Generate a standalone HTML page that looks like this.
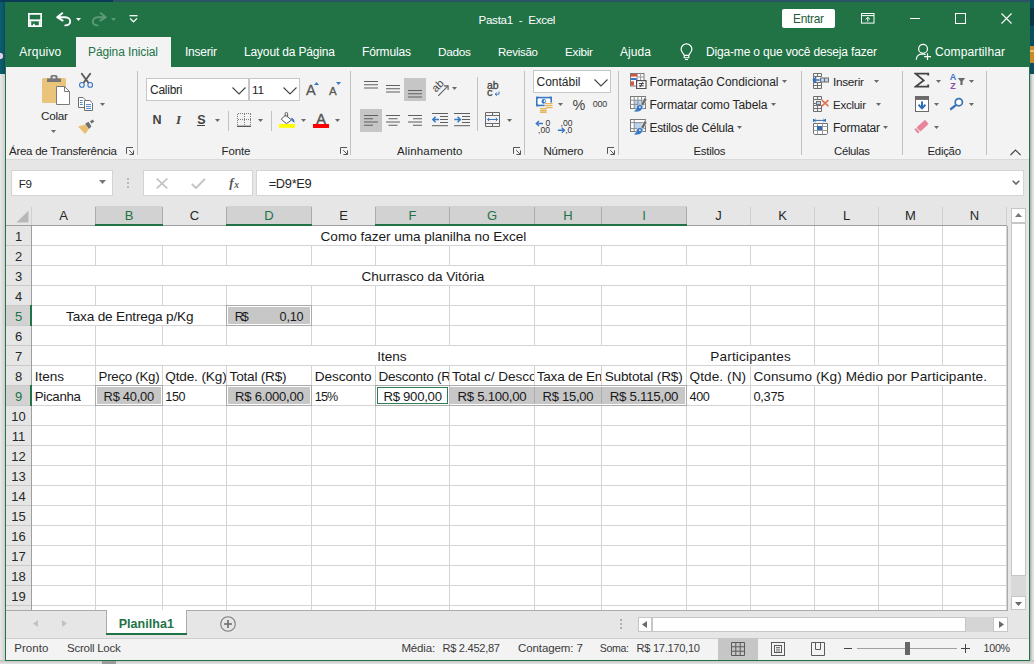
<!DOCTYPE html>
<html lang="pt-BR"><head><meta charset="utf-8"><title>Pasta1 - Excel</title>
<style>
*{box-sizing:border-box;margin:0;padding:0}
html,body{width:1034px;height:664px;overflow:hidden}
body{position:relative;background:#e4e4e4;font-family:"Liberation Sans",sans-serif;font-size:12px;color:#262626}
.a{position:absolute;display:block}
.t{position:absolute;display:block;white-space:pre}
</style></head>
<body>
<div class="a" style="left:0px;top:0px;width:1034px;height:74px;background:#0b4560;"></div>
<div class="a" style="left:0px;top:0px;width:5px;height:74px;background:linear-gradient(90deg,#0d6171,#0b4c62);"></div>
<div class="a" style="left:0px;top:0px;width:113px;height:2px;background:#0a3c58;"></div>
<div class="a" style="left:113px;top:0px;width:921px;height:2px;background:#2b5566;"></div>
<div class="a" style="left:0px;top:53px;width:4px;height:6px;background:#ddd6dc;border-radius:0 3px 3px 0;border-right:1px solid #2a3f8f;"></div>
<div class="a" style="left:1030px;top:0px;width:4px;height:74px;background:#0b4d5d;"></div>
<div class="a" style="left:1030px;top:8px;width:4px;height:18px;background:#0a3646;"></div>
<div class="a" style="left:1030px;top:46px;width:4px;height:17px;background:#c98a2b;"></div>
<div class="a" style="left:1030px;top:50px;width:4px;height:2px;background:#e6c384;"></div>
<div class="a" style="left:0px;top:74px;width:1034px;height:590px;background:#e9e9e9;"></div>
<div class="a" style="left:0px;top:74px;width:5px;height:590px;background:linear-gradient(90deg,#e9e9e9,#cfcfcf);"></div>
<div class="a" style="left:1030px;top:74px;width:4px;height:590px;background:linear-gradient(90deg,#a9a9a9,#e4e4e4 70%);"></div>
<div class="a" style="left:0px;top:660px;width:1034px;height:4px;background:linear-gradient(180deg,#bdbdbd,#e4e4e4);"></div>
<div class="a" style="left:102px;top:661px;width:14px;height:3px;background:#9c9c9c;"></div>
<div class="a" style="left:5px;top:2px;width:1025px;height:659px;background:#f3f3f3;border:1px solid #217346;"></div>
<div class="a" style="left:5px;top:2px;width:1025px;height:65px;background:#217346;"></div>
<div class="a" style="left:76px;top:37px;width:95px;height:30px;background:#f3f3f3;"></div>
<div class="a" style="left:6px;top:159px;width:1023px;height:1px;background:#dadada;"></div>
<div class="a" style="left:6px;top:160px;width:1023px;height:46px;background:#e6e6e6;"></div>
<svg class="a" style="left:28px;top:13px;" width="14" height="14" viewBox="0 0 14 14"><path d="M0.85 0.85h12.3v12.3h-12.3z" fill="none" stroke="#ffffff" stroke-width="1.7"/><rect x="1" y="6.4" width="12" height="1.9" fill="#ffffff"/><rect x="1.5" y="8.3" width="1.7" height="5" fill="#ffffff"/><rect x="10.8" y="8.3" width="1.7" height="5" fill="#ffffff"/><rect x="5.1" y="10.8" width="1.7" height="2.6" fill="#ffffff"/></svg>
<svg class="a" style="left:56px;top:12px;" width="16" height="15" viewBox="0 0 16 15"><path d="M1.2 5.3 L6.2 1.2 M1.2 5.3 L6.6 8.6 M1.6 5.3 H9.2 C12.6 5.3 14.2 7.4 14.2 9.4 C14.2 11.6 12.4 13.4 9.3 13.4" fill="none" stroke="#ffffff" stroke-width="1.9" stroke-linecap="round" stroke-linejoin="round"/></svg>
<svg class="a" style="left:76px;top:18px;" width="5" height="3" viewBox="0 0 5 3"><path d="M0 0h5l-2.5 3z" fill="#ffffff"/></svg>
<svg class="a" style="left:91px;top:12px;" width="16" height="15" viewBox="0 0 16 15"><path d="M14.8 5.3 L9.8 1.2 M14.8 5.3 L9.4 8.6 M14.4 5.3 H6.8 C3.4 5.3 1.8 7.4 1.8 9.4 C1.8 11.6 3.6 13.4 6.7 13.4" fill="none" stroke="#5c9a78" stroke-width="1.9" stroke-linecap="round" stroke-linejoin="round"/></svg>
<svg class="a" style="left:111px;top:18px;" width="5" height="3" viewBox="0 0 5 3"><path d="M0 0h5l-2.5 3z" fill="#5c9a78"/></svg>
<svg class="a" style="left:129px;top:15px;" width="9" height="8" viewBox="0 0 9 8"><path d="M0.5 0.7H8.5" stroke="#ffffff" stroke-width="1.3"/><path d="M1 3.4 L4.5 6.8 L8 3.4" fill="none" stroke="#ffffff" stroke-width="1.3"/></svg>
<span class="t" style="left:478.5px;top:14px;font-size:11.6px;line-height:12px;color:#ffffff;letter-spacing:-0.283px;">Pasta1  -  Excel</span>
<div class="a" style="left:782px;top:9px;width:53px;height:19px;background:#ffffff;border-radius:2px;"></div>
<span class="t" style="left:793px;top:12px;font-size:11.9px;line-height:14px;color:#1e5c3a;letter-spacing:-0.283px;">Entrar</span>
<svg class="a" style="left:861px;top:13px;" width="14" height="11" viewBox="0 0 14 11"><rect x="0.5" y="0.5" width="12.5" height="9.6" fill="none" stroke="#ffffff"/><path d="M0.5 2.6h12.5" stroke="#ffffff"/><path d="M6.8 8.6V4.6M4.6 6.4L6.8 4.3L9 6.4" fill="none" stroke="#ffffff"/></svg>
<div class="a" style="left:910px;top:18px;width:10px;height:1px;background:#ffffff;"></div>
<div class="a" style="left:955px;top:13px;width:11px;height:11px;border:1px solid #ffffff;"></div>
<svg class="a" style="left:1001px;top:13px;" width="11" height="11" viewBox="0 0 11 11"><path d="M0.5 0.5L10.5 10.5M10.5 0.5L0.5 10.5" stroke="#ffffff" stroke-width="1.1"/></svg>
<span class="t" style="left:19.3px;top:45px;font-size:12px;line-height:14px;color:#ffffff;letter-spacing:0.219px;">Arquivo</span>
<span class="t" style="left:88px;top:45px;font-size:12px;line-height:14px;color:#217346;letter-spacing:-0.107px;">Página Inicial</span>
<span class="t" style="left:185px;top:45px;font-size:12px;line-height:14px;color:#ffffff;letter-spacing:-0.224px;">Inserir</span>
<span class="t" style="left:244px;top:45px;font-size:12px;line-height:14px;color:#ffffff;letter-spacing:-0.161px;">Layout da Página</span>
<span class="t" style="left:362px;top:45px;font-size:12px;line-height:14px;color:#ffffff;letter-spacing:-0.145px;">Fórmulas</span>
<span class="t" style="left:438px;top:45px;font-size:11.8px;line-height:14px;color:#ffffff;letter-spacing:-0.277px;">Dados</span>
<span class="t" style="left:498px;top:46px;font-size:11.5px;line-height:12px;color:#ffffff;letter-spacing:-0.259px;">Revisão</span>
<span class="t" style="left:565px;top:45px;font-size:11.7px;line-height:13px;color:#ffffff;letter-spacing:-0.253px;">Exibir</span>
<span class="t" style="left:620px;top:45px;font-size:12px;line-height:14px;color:#ffffff;letter-spacing:0.074px;">Ajuda</span>
<svg class="a" style="left:680px;top:43px;" width="13" height="18" viewBox="0 0 13 18"><path d="M4.2 12.6 C4.2 10.8 1.1 9.6 1.1 6.3 C1.1 3.3 3.5 0.9 6.5 0.9 C9.5 0.9 11.9 3.3 11.9 6.3 C11.9 9.6 8.8 10.8 8.8 12.6" fill="none" stroke="#ffffff" stroke-width="1.2"/><path d="M4.2 12.4 V14.8 H8.8 V12.4 Z" fill="none" stroke="#ffffff" stroke-width="1.1"/><path d="M5 16.5H8" stroke="#ffffff" stroke-width="1.1"/></svg>
<span class="t" style="left:706px;top:45px;font-size:12px;line-height:14px;color:#ffffff;letter-spacing:-0.170px;">Diga-me o que você deseja fazer</span>
<svg class="a" style="left:915px;top:43px;" width="17" height="18" viewBox="0 0 17 18"><circle cx="8.05" cy="5.8" r="4.45" fill="none" stroke="#ffffff" stroke-width="1.2"/><path d="M1.3 16.8 C1.3 13.2 4 11 7.2 10.9 C8.6 10.9 9.8 11.2 10.6 11.8" fill="none" stroke="#ffffff" stroke-width="1.2"/><path d="M12.5 10.2V16.9M9.1 13.6H16" stroke="#ffffff" stroke-width="1.2"/></svg>
<span class="t" style="left:935px;top:45px;font-size:12px;line-height:14px;color:#ffffff;letter-spacing:0.118px;">Compartilhar</span>
<div class="a" style="left:137px;top:71px;width:1px;height:84px;background:#c2c2c2;"></div>
<div class="a" style="left:350px;top:71px;width:1px;height:84px;background:#c2c2c2;"></div>
<div class="a" style="left:524px;top:71px;width:1px;height:84px;background:#c2c2c2;"></div>
<div class="a" style="left:618px;top:71px;width:1px;height:84px;background:#c2c2c2;"></div>
<div class="a" style="left:801px;top:71px;width:1px;height:84px;background:#c2c2c2;"></div>
<div class="a" style="left:902px;top:71px;width:1px;height:84px;background:#c2c2c2;"></div>
<div class="a" style="left:986px;top:71px;width:1px;height:84px;background:#c2c2c2;"></div>
<svg class="a" style="left:42px;top:75px;" width="28" height="30" viewBox="0 0 28 30"><rect x="0" y="3" width="24" height="25" rx="1.5" fill="#eac47a"/><path d="M5 7V3.5h3.5V1.8C8.5 0.8 9.3 0 10.3 0h3.4c1 0 1.8 0.8 1.8 1.8V3.5H19V7z" fill="#767676"/><rect x="10.5" y="1.6" width="3" height="1.8" fill="#f3f3f3"/><path d="M14.5 11.5h8l5 5V29.5h-13z" fill="#ffffff" stroke="#7b7b7b"/><path d="M22.5 11.5v5h5" fill="none" stroke="#7b7b7b"/></svg>
<span class="t" style="left:41px;top:109px;font-size:11.7px;line-height:13px;letter-spacing:-0.243px;">Colar</span>
<svg class="a" style="left:51px;top:130px;" width="5" height="3" viewBox="0 0 5 3"><path d="M0 0h5l-2.5 3z" fill="#6a6a6a"/></svg>
<svg class="a" style="left:78px;top:72px;" width="16" height="17" viewBox="0 0 16 17"><path d="M3.8 1.8 L10.4 10.8 M12.2 1.8 L5.6 10.8" stroke="#5a5a5a" stroke-width="1.9" fill="none" stroke-linecap="round"/><circle cx="3.9" cy="12.9" r="2.35" fill="#f3f3f3" stroke="#3b78c4" stroke-width="1.1"/><circle cx="12.2" cy="12.9" r="2.35" fill="#f3f3f3" stroke="#3b78c4" stroke-width="1.1"/></svg>
<svg class="a" style="left:78px;top:97px;" width="16" height="15" viewBox="0 0 16 15"><path d="M0.5 0.5h4.6l2 2V10.5h-6.6z" fill="#fff" stroke="#6e6e6e"/><path d="M2 3.5h2.6M2 5.5h2.6M2 7.5h2.6" stroke="#3b78c4" stroke-width=".9"/><path d="M6.5 3.5h5.4l2.6 2.6v7.4h-8z" fill="#fff" stroke="#6e6e6e"/><path d="M8 7.6h5M8 9.6h5M8 11.6h5" stroke="#3b78c4" stroke-width=".9"/></svg>
<svg class="a" style="left:100px;top:103px;" width="5" height="3" viewBox="0 0 5 3"><path d="M0 0h5l-2.5 3z" fill="#6a6a6a"/></svg>
<svg class="a" style="left:78px;top:119px;" width="17" height="16" viewBox="0 0 17 16"><path d="M0.1 7.5 L7.5 5.4 L10.7 10.6 L7 14.9 Z" fill="#eabf72"/><path d="M7.2 4.8 L10.5 2.8 L13.5 7.6 L10.9 10 Z" fill="#6e6e6e"/><path d="M12 2.2 L14.9 0.6 L16.2 2.7 L13.3 4.6 Z" fill="#6e6e6e"/></svg>
<span class="t" style="left:9px;top:144.5px;font-size:11.5px;line-height:12px;letter-spacing:-0.258px;">Área de Transferência</span>
<svg class="a" style="left:126px;top:147px;" width="8" height="8" viewBox="0 0 8 8"><path d="M0.5 6.8V0.5H7" fill="none" stroke="#555"/><path d="M3.2 3.2L7.2 7.2M7.5 3.4V7.5H3.4" fill="none" stroke="#555" stroke-width="1"/></svg>
<div class="a" style="left:146px;top:78px;width:103px;height:23px;background:#fff;border:1px solid #c6c6c6;"></div>
<div class="a" style="left:249px;top:78px;width:51px;height:23px;background:#fff;border:1px solid #c6c6c6;border-left:none;"></div>
<div class="a" style="left:249px;top:79px;width:1px;height:21px;background:#c6c6c6;"></div>
<span class="t" style="left:150px;top:83px;font-size:12px;line-height:14px;letter-spacing:-0.253px;">Calibri</span>
<span class="t" style="left:252px;top:83px;font-size:11.8px;line-height:14px;letter-spacing:-0.261px;">11</span>
<svg class="a" style="left:232px;top:87px;" width="14" height="8" viewBox="0 0 14 8"><path d="M0.5 0.5L7 7L13.5 0.5" fill="none" stroke="#444" stroke-width="1.1"/></svg>
<svg class="a" style="left:283px;top:87px;" width="14" height="8" viewBox="0 0 14 8"><path d="M0.5 0.5L7 7L13.5 0.5" fill="none" stroke="#444" stroke-width="1.1"/></svg>
<span class="t" style="left:306px;top:81.5px;font-size:14.5px;line-height:16px;color:#555;-webkit-text-stroke:0.3px #555;">A</span>
<svg class="a" style="left:314px;top:82px;" width="5" height="3" viewBox="0 0 5 3"><path d="M0 3h5l-2.5-3z" fill="#3b78c4"/></svg>
<span class="t" style="left:329px;top:84.5px;font-size:11.5px;line-height:12px;color:#555;-webkit-text-stroke:0.3px #555;">A</span>
<svg class="a" style="left:336px;top:82px;" width="5" height="3" viewBox="0 0 5 3"><path d="M0 0h5l-2.5 3z" fill="#3b78c4"/></svg>
<span class="t" style="left:152.5px;top:113px;font-size:12.5px;line-height:14px;color:#444;font-weight:700;letter-spacing:-0.031px;">N</span>
<span class="t" style="left:176px;top:112px;font-size:13px;line-height:15px;color:#444;font-weight:700;font-family:'Liberation Serif',serif;font-style:italic;">I</span>
<span class="t" style="left:197.2px;top:113px;font-size:12.5px;line-height:14px;color:#444;font-weight:700;">S</span>
<div class="a" style="left:197px;top:125px;width:8px;height:1px;background:#444;"></div>
<svg class="a" style="left:215px;top:119px;" width="5" height="3" viewBox="0 0 5 3"><path d="M0 0h5l-2.5 3z" fill="#6a6a6a"/></svg>
<div class="a" style="left:228px;top:111px;width:1px;height:20px;background:#c2c2c2;"></div>
<svg class="a" style="left:237px;top:113px;" width="14" height="14" viewBox="0 0 14 14"><path d="M0.5 0.5H13.5M0.5 0.5V13M13.5 0.5V13M7 0.5V13M0.5 6.5H13.5" stroke="#7f7f7f" stroke-width="1" stroke-dasharray="1 1" fill="none" shape-rendering="crispEdges"/><path d="M0 13.3H14" stroke="#444" stroke-width="1.2"/></svg>
<svg class="a" style="left:258px;top:119px;" width="5" height="3" viewBox="0 0 5 3"><path d="M0 0h5l-2.5 3z" fill="#6a6a6a"/></svg>
<div class="a" style="left:271px;top:111px;width:1px;height:20px;background:#c2c2c2;"></div>
<svg class="a" style="left:279px;top:112px;" width="17" height="16" viewBox="0 0 17 16"><path d="M6.5 3.2 L12.5 8 L7.5 11.6 L2.2 7.2Z" fill="#fff" stroke="#5a5a5a" stroke-width="1"/><path d="M6.2 4.5V1.6c0-.8.5-1.2 1.2-1.2s1.2.4 1.2 1.2V5" fill="none" stroke="#5a5a5a"/><path d="M12.4 5.6c2.4 1 3.6 3 3 5.4-1.2-.8-2.2-2-3.2-3.6z" fill="#3b78c4"/><rect x="0" y="12" width="16" height="3.8" fill="#ffff00"/></svg>
<svg class="a" style="left:301px;top:119px;" width="5" height="3" viewBox="0 0 5 3"><path d="M0 0h5l-2.5 3z" fill="#6a6a6a"/></svg>
<span class="t" style="left:316.3px;top:110.5px;font-size:14.5px;line-height:16px;color:#555;-webkit-text-stroke:0.45px #555;">A</span>
<div class="a" style="left:313px;top:124px;width:16px;height:4px;background:#ff0000;"></div>
<svg class="a" style="left:335px;top:119px;" width="5" height="3" viewBox="0 0 5 3"><path d="M0 0h5l-2.5 3z" fill="#6a6a6a"/></svg>
<span class="t" style="left:221.5px;top:144.5px;font-size:11.5px;line-height:12px;letter-spacing:-0.105px;">Fonte</span>
<svg class="a" style="left:340px;top:147px;" width="8" height="8" viewBox="0 0 8 8"><path d="M0.5 6.8V0.5H7" fill="none" stroke="#555"/><path d="M3.2 3.2L7.2 7.2M7.5 3.4V7.5H3.4" fill="none" stroke="#555" stroke-width="1"/></svg>
<svg class="a" style="left:364px;top:81px;" width="14" height="10.75" viewBox="0 0 14 10.75"><rect x="0" y="0.00" width="14" height="1" fill="#5f5f5f"/><rect x="0" y="3.25" width="14" height="1" fill="#5f5f5f"/><rect x="0" y="6.50" width="14" height="1" fill="#5f5f5f"/></svg>
<svg class="a" style="left:386px;top:85px;" width="14" height="10.75" viewBox="0 0 14 10.75"><rect x="0" y="0.00" width="14" height="1" fill="#5f5f5f"/><rect x="0" y="3.25" width="14" height="1" fill="#5f5f5f"/><rect x="0" y="6.50" width="14" height="1" fill="#5f5f5f"/></svg>
<div class="a" style="left:404px;top:78px;width:22px;height:23px;background:#c6c6c6;"></div>
<svg class="a" style="left:408px;top:90px;" width="14" height="10.75" viewBox="0 0 14 10.75"><rect x="0" y="0.00" width="14" height="1" fill="#5f5f5f"/><rect x="0" y="3.25" width="14" height="1" fill="#5f5f5f"/><rect x="0" y="6.50" width="14" height="1" fill="#5f5f5f"/></svg>
<svg class="a" style="left:430px;top:79px;" width="20" height="18" viewBox="0 0 20 18"><path d="M8.2 16.8 L17.8 7.2" stroke="#5f5f5f" stroke-width="1.1" fill="none"/><path d="M14 6.9 L18.1 6.9 L18.1 11" fill="none" stroke="#5f5f5f" stroke-width="1.1"/><text x="0" y="0" font-family="Liberation Sans, sans-serif" font-size="11" fill="#444" transform="translate(5.9 13.7) rotate(-45)">ab</text></svg>
<svg class="a" style="left:452px;top:87px;" width="5" height="3" viewBox="0 0 5 3"><path d="M0 0h5l-2.5 3z" fill="#6a6a6a"/></svg>
<div class="a" style="left:477px;top:77px;width:1px;height:54px;background:#c2c2c2;"></div>
<span class="t" style="left:487px;top:78.5px;font-size:10.5px;line-height:12px;color:#444;letter-spacing:-0.193px;-webkit-text-stroke:0.3px #444;">ab</span>
<span class="t" style="left:487px;top:85.7px;font-size:11px;line-height:12px;color:#444;-webkit-text-stroke:0.3px #444;">c</span>
<svg class="a" style="left:493.5px;top:90.5px;" width="6" height="6" viewBox="0 0 6 6"><path d="M5 0.5V3.2H1.2M2.8 1.6L1.1 3.2L2.8 4.8" fill="none" stroke="#3b78c4" stroke-width="1"/></svg>
<div class="a" style="left:360px;top:109px;width:22px;height:23px;background:#c6c6c6;"></div>
<svg class="a" style="left:364px;top:115px;" width="14" height="14.0" viewBox="0 0 14 14.0"><rect x="0" y="0.00" width="14" height="1" fill="#5f5f5f"/><rect x="0" y="3.25" width="9" height="1" fill="#5f5f5f"/><rect x="0" y="6.50" width="14" height="1" fill="#5f5f5f"/><rect x="0" y="9.75" width="9" height="1" fill="#5f5f5f"/></svg>
<svg class="a" style="left:386px;top:115px;" width="14" height="14.0" viewBox="0 0 14 14.0"><rect x="0" y="0.00" width="14" height="1" fill="#5f5f5f"/><rect x="2.5" y="3.25" width="9" height="1" fill="#5f5f5f"/><rect x="0" y="6.50" width="14" height="1" fill="#5f5f5f"/><rect x="2.5" y="9.75" width="9" height="1" fill="#5f5f5f"/></svg>
<svg class="a" style="left:408px;top:115px;" width="14" height="14.0" viewBox="0 0 14 14.0"><rect x="0" y="0.00" width="14" height="1" fill="#5f5f5f"/><rect x="5" y="3.25" width="9" height="1" fill="#5f5f5f"/><rect x="0" y="6.50" width="14" height="1" fill="#5f5f5f"/><rect x="5" y="9.75" width="9" height="1" fill="#5f5f5f"/></svg>
<svg class="a" style="left:432px;top:113px;" width="16" height="14" viewBox="0 0 16 14"><rect x="0" y="0" width="16" height="1" fill="#5f5f5f"/><rect x="8" y="3" width="8" height="1" fill="#5f5f5f"/><rect x="8" y="6" width="8" height="1" fill="#5f5f5f"/><rect x="8" y="9" width="8" height="1" fill="#5f5f5f"/><rect x="0" y="12.2" width="16" height="1" fill="#5f5f5f"/><path d="M7 6.5H1.2M3.6 3.8L0.9 6.5L3.6 9.2" fill="none" stroke="#3b78c4" stroke-width="1.6"/></svg>
<svg class="a" style="left:454px;top:113px;" width="16" height="14" viewBox="0 0 16 14"><rect x="0" y="0" width="16" height="1" fill="#5f5f5f"/><rect x="8" y="3" width="8" height="1" fill="#5f5f5f"/><rect x="8" y="6" width="8" height="1" fill="#5f5f5f"/><rect x="8" y="9" width="8" height="1" fill="#5f5f5f"/><rect x="0" y="12.2" width="16" height="1" fill="#5f5f5f"/><path d="M0.3 6.5H6M3.6 3.8L6.3 6.5L3.6 9.2" fill="none" stroke="#3b78c4" stroke-width="1.6"/></svg>
<svg class="a" style="left:485px;top:112px;" width="15" height="15" viewBox="0 0 15 15"><path d="M0.5 0.5H14.5V14.5H0.5Z M0.5 3.5H14.5 M0.5 11.5H14.5 M7.5 0.5V3.5 M7.5 11.5V14.5" fill="none" stroke="#6a6a6a" stroke-width="1"/><path d="M2.5 7.5H12.5M4.2 5.8L2.5 7.5L4.2 9.2M10.8 5.8L12.5 7.5L10.8 9.2" fill="none" stroke="#3b78c4" stroke-width="1"/></svg>
<svg class="a" style="left:507px;top:119px;" width="5" height="3" viewBox="0 0 5 3"><path d="M0 0h5l-2.5 3z" fill="#6a6a6a"/></svg>
<span class="t" style="left:397px;top:144.5px;font-size:11.5px;line-height:12px;letter-spacing:0.156px;">Alinhamento</span>
<svg class="a" style="left:513px;top:147px;" width="8" height="8" viewBox="0 0 8 8"><path d="M0.5 6.8V0.5H7" fill="none" stroke="#555"/><path d="M3.2 3.2L7.2 7.2M7.5 3.4V7.5H3.4" fill="none" stroke="#555" stroke-width="1"/></svg>
<div class="a" style="left:533px;top:70px;width:78px;height:23px;background:#fff;border:1px solid #c6c6c6;"></div>
<span class="t" style="left:536.5px;top:75px;font-size:12px;line-height:14px;">Contábil</span>
<svg class="a" style="left:593.5px;top:79px;" width="14" height="8" viewBox="0 0 14 8"><path d="M0.5 0.5L7 7L13.5 0.5" fill="none" stroke="#444" stroke-width="1.1"/></svg>
<svg class="a" style="left:536px;top:95.6px;" width="17" height="17" viewBox="0 0 17 17"><rect x="0.8" y="1.6" width="14.4" height="7.8" fill="#fff" stroke="#3b78c4" stroke-width="1.6"/><path d="M0 0.8h3.2L0 4zM16 0.8h-3.2L16 4zM0 10.2h3.2L0 7zM16 10.2h-3.2L16 7z" fill="#3b78c4"/><circle cx="7.8" cy="5.4" r="2.3" fill="#3b78c4"/><circle cx="8.6" cy="5" r="0.9" fill="#fff"/><rect x="8.6" y="6.6" width="8" height="6.6" fill="#f3f3f3"/><path d="M9.6 7.6h6.4M9.6 9.6h6.4M9.6 11.6h6.4" stroke="#e8b65a" stroke-width="1.4" stroke-linecap="round"/><rect x="3.6" y="11.4" width="7" height="5.6" fill="#f3f3f3"/><path d="M4.6 12.6h5.6M4.6 14.5h5.6M4.6 16.3h5.6" stroke="#e8b65a" stroke-width="1.4" stroke-linecap="round"/></svg>
<svg class="a" style="left:558px;top:103px;" width="5" height="3" viewBox="0 0 5 3"><path d="M0 0h5l-2.5 3z" fill="#6a6a6a"/></svg>
<span class="t" style="left:572.5px;top:97px;font-size:14.4px;line-height:16px;color:#444;letter-spacing:-0.318px;">%</span>
<span class="t" style="left:592.8px;top:98.8px;font-size:9.0px;line-height:10px;color:#3a3a3a;letter-spacing:-0.262px;">000</span>
<svg class="a" style="left:535px;top:119px;" width="17" height="16" viewBox="0 0 17 16"><path d="M8 4.5H1.4M4 2L1.3 4.5L4 7" fill="none" stroke="#3b78c4" stroke-width="1.4"/><text x="10.6" y="6.6" font-family="Liberation Sans, sans-serif" font-size="8.6" fill="#333">0</text><text x="3" y="14" font-family="Liberation Sans, sans-serif" font-size="8.6" fill="#333">,00</text></svg>
<svg class="a" style="left:557px;top:119px;" width="17" height="16" viewBox="0 0 17 16"><text x="3.6" y="6.6" font-family="Liberation Sans, sans-serif" font-size="8.6" fill="#333">,00</text><path d="M0.8 11.3H7.4M4.8 8.8L7.5 11.3L4.8 13.8" fill="none" stroke="#3b78c4" stroke-width="1.4"/><text x="8.2" y="14" font-family="Liberation Sans, sans-serif" font-size="8.6" fill="#333">,0</text></svg>
<span class="t" style="left:543.5px;top:144.5px;font-size:11.5px;line-height:12px;letter-spacing:-0.181px;">Número</span>
<svg class="a" style="left:607px;top:147px;" width="8" height="8" viewBox="0 0 8 8"><path d="M0.5 6.8V0.5H7" fill="none" stroke="#555"/><path d="M3.2 3.2L7.2 7.2M7.5 3.4V7.5H3.4" fill="none" stroke="#555" stroke-width="1"/></svg>
<svg class="a" style="left:630px;top:73px;" width="17" height="16" viewBox="0 0 17 16"><rect x="0.5" y="0.5" width="13.5" height="12.5" fill="#fff" stroke="#7a7a7a"/><path d="M7.2 0.5V8M10.6 0.5V8M7.2 4H14" stroke="#9a9a9a" fill="none"/><rect x="1" y="1" width="6.2" height="2.6" fill="#d8553a"/><rect x="1" y="5" width="5.8" height="2" fill="#3b78c4"/><rect x="1" y="8.4" width="3" height="4.1" fill="#d8553a"/><rect x="6.6" y="7.6" width="9.4" height="8" fill="#fff" stroke="#4f4f4f" stroke-width="1.2"/><path d="M8.8 10.6h5M8.8 12.8h5M12.8 9.2L10 14.2" stroke="#3a3a3a" stroke-width="1" fill="none"/></svg>
<span class="t" style="left:649.5px;top:75px;font-size:12px;line-height:14px;letter-spacing:-0.051px;">Formatação Condicional</span>
<svg class="a" style="left:782px;top:80px;" width="5" height="3" viewBox="0 0 5 3"><path d="M0 0h5l-2.5 3z" fill="#6a6a6a"/></svg>
<svg class="a" style="left:630px;top:96px;" width="18" height="17" viewBox="0 0 18 17"><rect x="0.5" y="0.5" width="15" height="12" fill="#fff" stroke="#7a7a7a"/><rect x="4.4" y="4.4" width="7.2" height="7.8" fill="#b9d3ee"/><path d="M0.5 4.2H15.5M0.5 8.4H15.5M4.2 0.5V12.5M7.9 0.5V12.5M11.6 0.5V12.5" stroke="#8a8a8a" fill="none"/><path d="M14.6 1.4 L17 3.2 L13.2 10.2 L10.6 8.4 Z" fill="#6a6a6a" stroke="#f3f3f3" stroke-width=".6"/><path d="M10.8 8.6 C8.2 8 6.6 9.8 6.4 11.6 C6.2 13 5 14.6 3.6 15.4 C7.4 16.8 12.4 15.6 13.2 10.6 Z" fill="#3b78c4" stroke="#f3f3f3" stroke-width=".6"/><circle cx="9.9" cy="11.2" r=".9" fill="#e8f0fa"/></svg>
<span class="t" style="left:649.5px;top:98px;font-size:12px;line-height:14px;letter-spacing:-0.097px;">Formatar como Tabela</span>
<svg class="a" style="left:771px;top:103px;" width="5" height="3" viewBox="0 0 5 3"><path d="M0 0h5l-2.5 3z" fill="#6a6a6a"/></svg>
<svg class="a" style="left:630px;top:119px;" width="18" height="17" viewBox="0 0 18 17"><rect x="0.5" y="0.5" width="15" height="12" fill="#fff" stroke="#7a7a7a"/><rect x="4.4" y="4" width="7.4" height="5.4" fill="#b9d3ee"/><path d="M0.5 3.6H15.5M0.5 9.6H15.5M4.2 0.5V12.5" stroke="#8a8a8a" fill="none"/><path d="M14.6 1.4 L17 3.2 L13.2 10.2 L10.6 8.4 Z" fill="#6a6a6a" stroke="#f3f3f3" stroke-width=".6"/><path d="M10.8 8.6 C8.2 8 6.6 9.8 6.4 11.6 C6.2 13 5 14.6 3.6 15.4 C7.4 16.8 12.4 15.6 13.2 10.6 Z" fill="#3b78c4" stroke="#f3f3f3" stroke-width=".6"/><circle cx="9.9" cy="11.2" r=".9" fill="#e8f0fa"/></svg>
<span class="t" style="left:649.5px;top:120.5px;font-size:11.9px;line-height:14px;letter-spacing:-0.259px;">Estilos de Célula</span>
<svg class="a" style="left:737px;top:126px;" width="5" height="3" viewBox="0 0 5 3"><path d="M0 0h5l-2.5 3z" fill="#6a6a6a"/></svg>
<span class="t" style="left:693.5px;top:144.5px;font-size:11.4px;line-height:12px;letter-spacing:-0.263px;">Estilos</span>
<svg class="a" style="left:812px;top:72px;" width="18" height="18" viewBox="0 0 18 18"><path d="M1.5 1.5h8v3h-8zM5.5 1.5v3M1.5 10.5h8v6h-8zM5.5 10.5v6M1.5 13.5h8M1.5 4.5v6" fill="none" stroke="#6f6f6f"/><rect x="8.5" y="6" width="8" height="4" fill="#b9d3ee" stroke="#6f6f6f"/><path d="M12.5 6v4" stroke="#6f6f6f"/><path d="M7.6 8H1.6M4.2 5.4L1.5 8L4.2 10.6" fill="none" stroke="#2e6db5" stroke-width="1.6"/></svg>
<span class="t" style="left:833px;top:75px;font-size:11.8px;line-height:14px;letter-spacing:-0.298px;">Inserir</span>
<svg class="a" style="left:874px;top:80px;" width="5" height="3" viewBox="0 0 5 3"><path d="M0 0h5l-2.5 3z" fill="#6a6a6a"/></svg>
<svg class="a" style="left:812px;top:95px;" width="18" height="18" viewBox="0 0 18 18"><path d="M1.5 1.5h8v3h-8zM5.5 1.5v3M1.5 10.5h8v6h-8zM5.5 10.5v6M1.5 13.5h8M1.5 4.5v6M1.5 8.5h3" fill="none" stroke="#6f6f6f"/><rect x="4.5" y="6.5" width="4" height="3" fill="#b9d3ee" stroke="#6f6f6f"/><path d="M9.8 5.2L16.4 11.2M16.4 5.2L9.8 11.2" stroke="#e0714d" stroke-width="1.6" fill="none"/></svg>
<span class="t" style="left:833px;top:99px;font-size:11.5px;line-height:12px;letter-spacing:-0.252px;">Excluir</span>
<svg class="a" style="left:876px;top:103px;" width="5" height="3" viewBox="0 0 5 3"><path d="M0 0h5l-2.5 3z" fill="#6a6a6a"/></svg>
<svg class="a" style="left:812px;top:118px;" width="18" height="18" viewBox="0 0 18 18"><path d="M1.5 1V3.8M13.5 1V3.8M2 2.4H13M3.6 1L2 2.4L3.6 3.8M11.4 1L13 2.4L11.4 3.8" stroke="#2e6db5" fill="none" stroke-width="1"/><path d="M1.5 5.5h14v9.5c0 .8-.6 1.5-1.5 1.5h-11c-.9 0-1.5-.7-1.5-1.5z" fill="#fff" stroke="#6f6f6f"/><path d="M1.5 8.5h14M1.5 12.5h14M5.5 5.5v11M10.5 5.5v11" stroke="#9a9a9a" fill="none"/><rect x="5" y="8" width="5" height="4" fill="#2e6db5"/></svg>
<span class="t" style="left:833px;top:120.5px;font-size:12px;line-height:14px;letter-spacing:-0.241px;">Formatar</span>
<svg class="a" style="left:883px;top:126px;" width="5" height="3" viewBox="0 0 5 3"><path d="M0 0h5l-2.5 3z" fill="#6a6a6a"/></svg>
<span class="t" style="left:834px;top:144.5px;font-size:11.3px;line-height:12px;letter-spacing:-0.282px;">Células</span>
<svg class="a" style="left:914px;top:72px;" width="16" height="17" viewBox="0 0 16 17"><path d="M14.2 3.6V1.6H1.6L9.6 8.4L1.6 14.6H14.2V12.6" fill="none" stroke="#444" stroke-width="1.9" stroke-linejoin="miter"/></svg>
<svg class="a" style="left:936px;top:80px;" width="5" height="3" viewBox="0 0 5 3"><path d="M0 0h5l-2.5 3z" fill="#6a6a6a"/></svg>
<svg class="a" style="left:949px;top:72px;" width="17" height="18" viewBox="0 0 17 18"><text x="0.8" y="7.6" font-family="Liberation Sans, sans-serif" font-size="9" font-weight="700" fill="#3b78c4">A</text><text x="1.2" y="16.8" font-family="Liberation Sans, sans-serif" font-size="9" font-weight="700" fill="#8a4fb0">Z</text><path d="M8.8 6H16.2L13.6 9.2V13H11.4V9.2Z" fill="#6a6a6a"/></svg>
<svg class="a" style="left:969px;top:80px;" width="5" height="3" viewBox="0 0 5 3"><path d="M0 0h5l-2.5 3z" fill="#6a6a6a"/></svg>
<svg class="a" style="left:915px;top:96px;" width="14" height="16" viewBox="0 0 14 16"><rect x="0.5" y="0.5" width="13" height="15" fill="#fff" stroke="#6a6a6a"/><rect x="0.5" y="0.5" width="13" height="3.4" fill="#6a6a6a"/><path d="M7 5.6V12M3.6 8.8L7 12.4L10.4 8.8" fill="none" stroke="#2e6db5" stroke-width="2"/></svg>
<svg class="a" style="left:934px;top:103px;" width="5" height="3" viewBox="0 0 5 3"><path d="M0 0h5l-2.5 3z" fill="#6a6a6a"/></svg>
<svg class="a" style="left:949px;top:97px;" width="15" height="14" viewBox="0 0 15 14"><circle cx="9.8" cy="5.2" r="3.6" fill="#fff" stroke="#3b73b5" stroke-width="1.7"/><path d="M6.8 8.2L2 12" stroke="#3b73b5" stroke-width="2.3" stroke-linecap="round"/></svg>
<svg class="a" style="left:969px;top:103px;" width="5" height="3" viewBox="0 0 5 3"><path d="M0 0h5l-2.5 3z" fill="#6a6a6a"/></svg>
<svg class="a" style="left:914px;top:119px;" width="16" height="15" viewBox="0 0 16 15"><g transform="rotate(-42 7.8 7.4)"><rect x="3.2" y="4.6" width="11.4" height="5.6" rx="1" fill="#e8859b"/><rect x="0.2" y="4.6" width="2.2" height="5.6" rx=".8" fill="#e8859b"/></g></svg>
<svg class="a" style="left:934px;top:126px;" width="5" height="3" viewBox="0 0 5 3"><path d="M0 0h5l-2.5 3z" fill="#6a6a6a"/></svg>
<span class="t" style="left:927.5px;top:144.5px;font-size:11.4px;line-height:12px;letter-spacing:-0.273px;">Edição</span>
<svg class="a" style="left:1010px;top:149px;" width="11" height="7" viewBox="0 0 11 7"><path d="M0.5 6L5.5 1L10.5 6" fill="none" stroke="#444" stroke-width="1.1"/></svg>
<div class="a" style="left:11px;top:170px;width:102px;height:26px;background:#fff;border:1px solid #d4d4d4;"></div>
<span class="t" style="left:18.7px;top:178px;font-size:11.6px;line-height:12px;letter-spacing:-0.343px;">F9</span>
<svg class="a" style="left:99px;top:180px;" width="7" height="4" viewBox="0 0 7 4"><path d="M0 0h7l-3.5 4z" fill="#777"/></svg>
<div class="a" style="left:127px;top:178px;width:2px;height:2px;background:#b8b8b8;"></div>
<div class="a" style="left:127px;top:182px;width:2px;height:2px;background:#b8b8b8;"></div>
<div class="a" style="left:127px;top:186px;width:2px;height:2px;background:#b8b8b8;"></div>
<div class="a" style="left:143px;top:170px;width:110px;height:26px;background:#fff;border:1px solid #d4d4d4;"></div>
<svg class="a" style="left:156px;top:178px;" width="12" height="11" viewBox="0 0 12 11"><path d="M0.7 0.7L11.3 10.3M11.3 0.7L0.7 10.3" stroke="#c3c3c3" stroke-width="1.8" fill="none"/></svg>
<svg class="a" style="left:191px;top:178px;" width="15" height="11" viewBox="0 0 15 11"><path d="M0.8 6L5 10L14 0.8" stroke="#c3c3c3" stroke-width="1.9" fill="none"/></svg>
<span class="t" style="left:229.3px;top:174.5px;font-size:13px;line-height:15px;color:#555;font-weight:700;font-family:'Liberation Serif',serif;font-style:italic;">f</span>
<span class="t" style="left:234.3px;top:179.8px;font-size:9.5px;line-height:11px;color:#555;font-weight:700;font-family:'Liberation Serif',serif;font-style:italic;">x</span>
<div class="a" style="left:256px;top:170px;width:768px;height:26px;background:#fff;border:1px solid #d4d4d4;"></div>
<span class="t" style="left:268.7px;top:176px;font-size:12.8px;line-height:15px;letter-spacing:-0.298px;">=D9*E9</span>
<svg class="a" style="left:1012px;top:180px;" width="8" height="5" viewBox="0 0 8 5"><path d="M0.7 0.7L4 4L7.3 0.7" fill="none" stroke="#666" stroke-width="1.6"/></svg>
<div class="a" style="left:32px;top:226px;width:975px;height:384px;background:#fff;"></div>
<div class="a" style="left:32px;top:245px;width:975px;height:1px;background:#d4d4d4;"></div>
<div class="a" style="left:32px;top:265px;width:975px;height:1px;background:#d4d4d4;"></div>
<div class="a" style="left:32px;top:285px;width:975px;height:1px;background:#d4d4d4;"></div>
<div class="a" style="left:32px;top:305px;width:975px;height:1px;background:#d4d4d4;"></div>
<div class="a" style="left:32px;top:325px;width:975px;height:1px;background:#d4d4d4;"></div>
<div class="a" style="left:32px;top:345px;width:975px;height:1px;background:#d4d4d4;"></div>
<div class="a" style="left:32px;top:365px;width:975px;height:1px;background:#d4d4d4;"></div>
<div class="a" style="left:32px;top:385px;width:975px;height:1px;background:#d4d4d4;"></div>
<div class="a" style="left:32px;top:405px;width:975px;height:1px;background:#d4d4d4;"></div>
<div class="a" style="left:32px;top:425px;width:975px;height:1px;background:#d4d4d4;"></div>
<div class="a" style="left:32px;top:445px;width:975px;height:1px;background:#d4d4d4;"></div>
<div class="a" style="left:32px;top:465px;width:975px;height:1px;background:#d4d4d4;"></div>
<div class="a" style="left:32px;top:485px;width:975px;height:1px;background:#d4d4d4;"></div>
<div class="a" style="left:32px;top:505px;width:975px;height:1px;background:#d4d4d4;"></div>
<div class="a" style="left:32px;top:525px;width:975px;height:1px;background:#d4d4d4;"></div>
<div class="a" style="left:32px;top:545px;width:975px;height:1px;background:#d4d4d4;"></div>
<div class="a" style="left:32px;top:565px;width:975px;height:1px;background:#d4d4d4;"></div>
<div class="a" style="left:32px;top:585px;width:975px;height:1px;background:#d4d4d4;"></div>
<div class="a" style="left:32px;top:605px;width:975px;height:1px;background:#d4d4d4;"></div>
<div class="a" style="left:95px;top:226px;width:1px;height:384px;background:#d4d4d4;"></div>
<div class="a" style="left:162px;top:226px;width:1px;height:384px;background:#d4d4d4;"></div>
<div class="a" style="left:226px;top:226px;width:1px;height:384px;background:#d4d4d4;"></div>
<div class="a" style="left:311px;top:226px;width:1px;height:384px;background:#d4d4d4;"></div>
<div class="a" style="left:375px;top:226px;width:1px;height:384px;background:#d4d4d4;"></div>
<div class="a" style="left:449px;top:226px;width:1px;height:384px;background:#d4d4d4;"></div>
<div class="a" style="left:534px;top:226px;width:1px;height:384px;background:#d4d4d4;"></div>
<div class="a" style="left:601px;top:226px;width:1px;height:384px;background:#d4d4d4;"></div>
<div class="a" style="left:686px;top:226px;width:1px;height:384px;background:#d4d4d4;"></div>
<div class="a" style="left:750px;top:226px;width:1px;height:384px;background:#d4d4d4;"></div>
<div class="a" style="left:814px;top:226px;width:1px;height:384px;background:#d4d4d4;"></div>
<div class="a" style="left:878px;top:226px;width:1px;height:384px;background:#d4d4d4;"></div>
<div class="a" style="left:942px;top:226px;width:1px;height:384px;background:#d4d4d4;"></div>
<div class="a" style="left:1006px;top:226px;width:1px;height:384px;background:#d4d4d4;"></div>
<div class="a" style="left:32px;top:226px;width:782px;height:19px;background:#fff;"></div>
<div class="a" style="left:32px;top:266px;width:782px;height:19px;background:#fff;"></div>
<div class="a" style="left:32px;top:306px;width:194px;height:19px;background:#fff;"></div>
<div class="a" style="left:96px;top:346px;width:590px;height:19px;background:#fff;"></div>
<div class="a" style="left:687px;top:346px;width:127px;height:19px;background:#fff;"></div>
<div class="a" style="left:751px;top:366px;width:255px;height:19px;background:#fff;"></div>
<div class="a" style="left:6px;top:206px;width:1002px;height:20px;background:#e6e6e6;"></div>
<div class="a" style="left:32px;top:225px;width:64px;height:1px;background:#9f9f9f;"></div>
<div class="a" style="left:95px;top:206px;width:68px;height:20px;background:#d2d2d2;"></div>
<div class="a" style="left:95px;top:224px;width:68px;height:2px;background:#217346;"></div>
<div class="a" style="left:163px;top:225px;width:64px;height:1px;background:#9f9f9f;"></div>
<div class="a" style="left:226px;top:206px;width:86px;height:20px;background:#d2d2d2;"></div>
<div class="a" style="left:226px;top:224px;width:86px;height:2px;background:#217346;"></div>
<div class="a" style="left:312px;top:225px;width:64px;height:1px;background:#9f9f9f;"></div>
<div class="a" style="left:375px;top:206px;width:75px;height:20px;background:#d2d2d2;"></div>
<div class="a" style="left:375px;top:224px;width:75px;height:2px;background:#217346;"></div>
<div class="a" style="left:449px;top:206px;width:86px;height:20px;background:#d2d2d2;"></div>
<div class="a" style="left:449px;top:224px;width:86px;height:2px;background:#217346;"></div>
<div class="a" style="left:534px;top:206px;width:68px;height:20px;background:#d2d2d2;"></div>
<div class="a" style="left:534px;top:224px;width:68px;height:2px;background:#217346;"></div>
<div class="a" style="left:601px;top:206px;width:86px;height:20px;background:#d2d2d2;"></div>
<div class="a" style="left:601px;top:224px;width:86px;height:2px;background:#217346;"></div>
<div class="a" style="left:687px;top:225px;width:64px;height:1px;background:#9f9f9f;"></div>
<div class="a" style="left:751px;top:225px;width:64px;height:1px;background:#9f9f9f;"></div>
<div class="a" style="left:815px;top:225px;width:64px;height:1px;background:#9f9f9f;"></div>
<div class="a" style="left:879px;top:225px;width:64px;height:1px;background:#9f9f9f;"></div>
<div class="a" style="left:943px;top:225px;width:64px;height:1px;background:#9f9f9f;"></div>
<div class="a" style="left:95px;top:207px;width:1px;height:17px;background:#ababab;"></div>
<div class="a" style="left:162px;top:207px;width:1px;height:17px;background:#ababab;"></div>
<div class="a" style="left:226px;top:207px;width:1px;height:17px;background:#ababab;"></div>
<div class="a" style="left:311px;top:207px;width:1px;height:17px;background:#ababab;"></div>
<div class="a" style="left:375px;top:207px;width:1px;height:17px;background:#ababab;"></div>
<div class="a" style="left:449px;top:207px;width:1px;height:17px;background:#ababab;"></div>
<div class="a" style="left:534px;top:207px;width:1px;height:17px;background:#ababab;"></div>
<div class="a" style="left:601px;top:207px;width:1px;height:17px;background:#ababab;"></div>
<div class="a" style="left:686px;top:207px;width:1px;height:17px;background:#ababab;"></div>
<div class="a" style="left:750px;top:207px;width:1px;height:18px;background:#cfcfcf;"></div>
<div class="a" style="left:814px;top:207px;width:1px;height:18px;background:#cfcfcf;"></div>
<div class="a" style="left:878px;top:207px;width:1px;height:18px;background:#cfcfcf;"></div>
<div class="a" style="left:942px;top:207px;width:1px;height:18px;background:#cfcfcf;"></div>
<div class="a" style="left:1006px;top:207px;width:1px;height:18px;background:#cfcfcf;"></div>
<div class="a" style="left:31px;top:207px;width:1px;height:19px;background:#cfcfcf;"></div>
<div class="a" style="left:6px;top:225px;width:26px;height:1px;background:#9f9f9f;"></div>
<svg class="a" style="left:16px;top:210px;" width="13" height="13" viewBox="0 0 13 13"><path d="M12.5 0.5V12.5H0.5Z" fill="#b8b8b8"/></svg>
<span class="t" style="left:0px;top:208px;font-size:13px;line-height:15px;left:32px;width:63px;text-align:center;">A</span>
<span class="t" style="left:0px;top:208px;font-size:13px;line-height:15px;color:#217346;left:96px;width:66px;text-align:center;">B</span>
<span class="t" style="left:0px;top:208px;font-size:13px;line-height:15px;left:163px;width:63px;text-align:center;">C</span>
<span class="t" style="left:0px;top:208px;font-size:13px;line-height:15px;color:#217346;left:227px;width:84px;text-align:center;">D</span>
<span class="t" style="left:0px;top:208px;font-size:13px;line-height:15px;left:312px;width:63px;text-align:center;">E</span>
<span class="t" style="left:0px;top:208px;font-size:13px;line-height:15px;color:#217346;left:376px;width:73px;text-align:center;">F</span>
<span class="t" style="left:0px;top:208px;font-size:13px;line-height:15px;color:#217346;left:450px;width:84px;text-align:center;">G</span>
<span class="t" style="left:0px;top:208px;font-size:13px;line-height:15px;color:#217346;left:535px;width:66px;text-align:center;">H</span>
<span class="t" style="left:0px;top:208px;font-size:13px;line-height:15px;color:#217346;left:602px;width:84px;text-align:center;">I</span>
<span class="t" style="left:0px;top:208px;font-size:13px;line-height:15px;left:687px;width:63px;text-align:center;">J</span>
<span class="t" style="left:0px;top:208px;font-size:13px;line-height:15px;left:751px;width:63px;text-align:center;">K</span>
<span class="t" style="left:0px;top:208px;font-size:13px;line-height:15px;left:815px;width:63px;text-align:center;">L</span>
<span class="t" style="left:0px;top:208px;font-size:13px;line-height:15px;left:879px;width:63px;text-align:center;">M</span>
<span class="t" style="left:0px;top:208px;font-size:13px;line-height:15px;left:943px;width:63px;text-align:center;">N</span>
<div class="a" style="left:6px;top:226px;width:25px;height:384px;background:#e6e6e6;"></div>
<div class="a" style="left:31px;top:226px;width:1px;height:384px;background:#9f9f9f;"></div>
<div class="a" style="left:6px;top:245px;width:25px;height:1px;background:#c9c9c9;"></div>
<span class="t" style="left:0px;top:228.6px;font-size:13px;line-height:15px;left:6px;width:25px;text-align:center;">1</span>
<div class="a" style="left:6px;top:265px;width:25px;height:1px;background:#c9c9c9;"></div>
<span class="t" style="left:0px;top:248.6px;font-size:13px;line-height:15px;left:6px;width:25px;text-align:center;">2</span>
<div class="a" style="left:6px;top:285px;width:25px;height:1px;background:#c9c9c9;"></div>
<span class="t" style="left:0px;top:268.6px;font-size:13px;line-height:15px;left:6px;width:25px;text-align:center;">3</span>
<div class="a" style="left:6px;top:305px;width:25px;height:1px;background:#c9c9c9;"></div>
<span class="t" style="left:0px;top:288.6px;font-size:13px;line-height:15px;left:6px;width:25px;text-align:center;">4</span>
<div class="a" style="left:6px;top:306px;width:24px;height:19px;background:#d2d2d2;"></div>
<div class="a" style="left:30px;top:305px;width:2px;height:21px;background:#217346;"></div>
<div class="a" style="left:6px;top:325px;width:24px;height:1px;background:#c9c9c9;"></div>
<span class="t" style="left:0px;top:308.6px;font-size:13px;line-height:15px;color:#217346;left:6px;width:25px;text-align:center;">5</span>
<div class="a" style="left:6px;top:345px;width:25px;height:1px;background:#c9c9c9;"></div>
<span class="t" style="left:0px;top:328.6px;font-size:13px;line-height:15px;left:6px;width:25px;text-align:center;">6</span>
<div class="a" style="left:6px;top:365px;width:25px;height:1px;background:#c9c9c9;"></div>
<span class="t" style="left:0px;top:348.6px;font-size:13px;line-height:15px;left:6px;width:25px;text-align:center;">7</span>
<div class="a" style="left:6px;top:385px;width:25px;height:1px;background:#c9c9c9;"></div>
<span class="t" style="left:0px;top:368.6px;font-size:13px;line-height:15px;left:6px;width:25px;text-align:center;">8</span>
<div class="a" style="left:6px;top:386px;width:24px;height:19px;background:#d2d2d2;"></div>
<div class="a" style="left:30px;top:385px;width:2px;height:21px;background:#217346;"></div>
<div class="a" style="left:6px;top:405px;width:24px;height:1px;background:#c9c9c9;"></div>
<span class="t" style="left:0px;top:388.6px;font-size:13px;line-height:15px;color:#217346;left:6px;width:25px;text-align:center;">9</span>
<div class="a" style="left:6px;top:425px;width:25px;height:1px;background:#c9c9c9;"></div>
<span class="t" style="left:0px;top:408.6px;font-size:13px;line-height:15px;left:6px;width:25px;text-align:center;">10</span>
<div class="a" style="left:6px;top:445px;width:25px;height:1px;background:#c9c9c9;"></div>
<span class="t" style="left:0px;top:428.6px;font-size:13px;line-height:15px;left:6px;width:25px;text-align:center;">11</span>
<div class="a" style="left:6px;top:465px;width:25px;height:1px;background:#c9c9c9;"></div>
<span class="t" style="left:0px;top:448.6px;font-size:13px;line-height:15px;left:6px;width:25px;text-align:center;">12</span>
<div class="a" style="left:6px;top:485px;width:25px;height:1px;background:#c9c9c9;"></div>
<span class="t" style="left:0px;top:468.6px;font-size:13px;line-height:15px;left:6px;width:25px;text-align:center;">13</span>
<div class="a" style="left:6px;top:505px;width:25px;height:1px;background:#c9c9c9;"></div>
<span class="t" style="left:0px;top:488.6px;font-size:13px;line-height:15px;left:6px;width:25px;text-align:center;">14</span>
<div class="a" style="left:6px;top:525px;width:25px;height:1px;background:#c9c9c9;"></div>
<span class="t" style="left:0px;top:508.6px;font-size:13px;line-height:15px;left:6px;width:25px;text-align:center;">15</span>
<div class="a" style="left:6px;top:545px;width:25px;height:1px;background:#c9c9c9;"></div>
<span class="t" style="left:0px;top:528.6px;font-size:13px;line-height:15px;left:6px;width:25px;text-align:center;">16</span>
<div class="a" style="left:6px;top:565px;width:25px;height:1px;background:#c9c9c9;"></div>
<span class="t" style="left:0px;top:548.6px;font-size:13px;line-height:15px;left:6px;width:25px;text-align:center;">17</span>
<div class="a" style="left:6px;top:585px;width:25px;height:1px;background:#c9c9c9;"></div>
<span class="t" style="left:0px;top:568.6px;font-size:13px;line-height:15px;left:6px;width:25px;text-align:center;">18</span>
<div class="a" style="left:6px;top:605px;width:25px;height:1px;background:#c9c9c9;"></div>
<span class="t" style="left:0px;top:588.6px;font-size:13px;line-height:15px;left:6px;width:25px;text-align:center;">19</span>
<div class="a" style="left:226px;top:305px;width:86px;height:21px;background:#fdfdfd;border:1px solid #ababab;"></div>
<div class="a" style="left:228px;top:307px;width:82px;height:17px;background:#c7c7c7;"></div>
<div class="a" style="left:95px;top:385px;width:68px;height:21px;background:#fdfdfd;border:1px solid #ababab;"></div>
<div class="a" style="left:97px;top:387px;width:64px;height:17px;background:#c7c7c7;"></div>
<div class="a" style="left:226px;top:385px;width:86px;height:21px;background:#fdfdfd;border:1px solid #ababab;"></div>
<div class="a" style="left:228px;top:387px;width:82px;height:17px;background:#c7c7c7;"></div>
<div class="a" style="left:375px;top:385px;width:312px;height:21px;background:#fdfdfd;border:1px solid #ababab;"></div>
<div class="a" style="left:450px;top:387px;width:235px;height:17px;background:#c7c7c7;"></div>
<div class="a" style="left:449px;top:386px;width:1px;height:19px;background:#bdbdbd;"></div>
<div class="a" style="left:534px;top:387px;width:1px;height:17px;background:#adadad;"></div>
<div class="a" style="left:601px;top:387px;width:1px;height:17px;background:#adadad;"></div>
<div class="a" style="left:377px;top:387px;width:71px;height:17px;background:#fff;border:1px solid #2f7d52;"></div>
<span class="t" style="left:320.6px;top:228.6px;font-size:13.6px;line-height:15px;color:#1a1a1a;letter-spacing:-0.043px;">Como fazer uma planilha no Excel</span>
<span class="t" style="left:361.6px;top:268.6px;font-size:13.6px;line-height:15px;color:#1a1a1a;letter-spacing:-0.051px;">Churrasco da Vitória</span>
<span class="t" style="left:66px;top:308.6px;font-size:13.6px;line-height:15px;color:#1a1a1a;letter-spacing:-0.166px;">Taxa de Entrega p/Kg</span>
<span class="t" style="left:234.8px;top:309.6px;font-size:12.6px;line-height:14px;color:#1a1a1a;letter-spacing:-2.112px;">R$</span>
<span class="t" style="left:279.6px;top:309.6px;font-size:12.7px;line-height:14px;color:#1a1a1a;letter-spacing:-0.239px;">0,10</span>
<span class="t" style="left:377.2px;top:348.6px;font-size:13.6px;line-height:15px;color:#1a1a1a;letter-spacing:-0.021px;">Itens</span>
<span class="t" style="left:710.3px;top:348.6px;font-size:13.6px;line-height:15px;color:#1a1a1a;letter-spacing:0.159px;">Participantes</span>
<span class="t" style="left:34.7px;top:368.6px;font-size:13.6px;line-height:15px;color:#1a1a1a;letter-spacing:-0.021px;">Itens</span>
<span class="t" style="left:98.6px;top:368.6px;font-size:13.3px;line-height:15px;color:#1a1a1a;letter-spacing:-0.282px;">Preço (Kg)</span>
<div class="a" style="left:165.2px;top:366px;width:60.80000000000001px;height:19px;overflow:hidden">
<span class="t" style="left:0px;top:2.6px;font-size:13.6px;line-height:15px;color:#1a1a1a;letter-spacing:-0.135px;">Qtde. (Kg)</span>
</div>
<span class="t" style="left:229.6px;top:368.6px;font-size:13.6px;line-height:15px;color:#1a1a1a;letter-spacing:-0.214px;">Total (R$)</span>
<span class="t" style="left:314.8px;top:368.6px;font-size:13.6px;line-height:15px;color:#1a1a1a;letter-spacing:-0.091px;">Desconto</span>
<div class="a" style="left:378.4px;top:366px;width:70.60000000000002px;height:19px;overflow:hidden">
<span class="t" style="left:0px;top:2.6px;font-size:13.5px;line-height:15px;color:#1a1a1a;letter-spacing:-0.250px;">Desconto (R$)</span>
</div>
<div class="a" style="left:452px;top:366px;width:82px;height:19px;overflow:hidden">
<span class="t" style="left:0px;top:2.6px;font-size:13.6px;line-height:15px;color:#1a1a1a;letter-spacing:-0.071px;">Total c/ Desconto (R$)</span>
</div>
<div class="a" style="left:536.8px;top:366px;width:64.20000000000005px;height:19px;overflow:hidden">
<span class="t" style="left:0px;top:2.6px;font-size:13.6px;line-height:15px;color:#1a1a1a;letter-spacing:-0.275px;">Taxa de Entrega (R$)</span>
</div>
<span class="t" style="left:604.7px;top:368.6px;font-size:13.6px;line-height:15px;color:#1a1a1a;letter-spacing:-0.174px;">Subtotal (R$)</span>
<span class="t" style="left:689.6px;top:368.6px;font-size:13.6px;line-height:15px;color:#1a1a1a;letter-spacing:0.074px;">Qtde. (N)</span>
<span class="t" style="left:753.4px;top:368.6px;font-size:13.6px;line-height:15px;color:#1a1a1a;letter-spacing:0.068px;">Consumo (Kg) Médio por Participante.</span>
<span class="t" style="left:34.7px;top:388.6px;font-size:13.3px;line-height:15px;color:#1a1a1a;letter-spacing:-0.290px;">Picanha</span>
<span class="t" style="left:103.6px;top:388.6px;font-size:12.9px;line-height:15px;color:#1a1a1a;letter-spacing:-0.262px;">R$ 40,00</span>
<span class="t" style="left:165.2px;top:389.6px;font-size:12.6px;line-height:14px;color:#1a1a1a;letter-spacing:-0.310px;">150</span>
<span class="t" style="left:235.1px;top:388.6px;font-size:13.1px;line-height:15px;color:#1a1a1a;letter-spacing:-0.275px;">R$ 6.000,00</span>
<span class="t" style="left:314.8px;top:389.6px;font-size:12.6px;line-height:14px;color:#1a1a1a;letter-spacing:-0.909px;">15%</span>
<span class="t" style="left:383.4px;top:388.6px;font-size:13.2px;line-height:15px;color:#1a1a1a;letter-spacing:-0.286px;">R$ 900,00</span>
<span class="t" style="left:457.6px;top:388.6px;font-size:13.2px;line-height:15px;color:#1a1a1a;letter-spacing:-0.290px;">R$ 5.100,00</span>
<span class="t" style="left:542.6px;top:388.6px;font-size:13.0px;line-height:15px;color:#1a1a1a;letter-spacing:-0.277px;">R$ 15,00</span>
<span class="t" style="left:609.7px;top:388.6px;font-size:13.3px;line-height:15px;color:#1a1a1a;letter-spacing:-0.275px;">R$ 5.115,00</span>
<span class="t" style="left:689.6px;top:389.6px;font-size:12.6px;line-height:14px;color:#1a1a1a;letter-spacing:-0.460px;">400</span>
<span class="t" style="left:753.4px;top:388.6px;font-size:12.8px;line-height:15px;color:#1a1a1a;letter-spacing:-0.257px;">0,375</span>
<div class="a" style="left:1007px;top:206px;width:22px;height:404px;background:#e6e6e6;"></div>
<div class="a" style="left:1007px;top:226px;width:1px;height:384px;background:#ababab;"></div>
<div class="a" style="left:1011px;top:208px;width:15px;height:15px;background:#fff;border:1px solid #c6c6c6;"></div>
<svg class="a" style="left:1015px;top:213px;" width="7" height="4" viewBox="0 0 7 4"><path d="M0 4h7l-3.5-4z" fill="#777"/></svg>
<div class="a" style="left:1011px;top:223px;width:15px;height:353px;background:#fff;border:1px solid #c6c6c6;"></div>
<div class="a" style="left:1011px;top:576px;width:15px;height:20px;background:#d9d9d9;"></div>
<div class="a" style="left:1011px;top:596px;width:15px;height:14px;background:#fff;border:1px solid #c6c6c6;"></div>
<svg class="a" style="left:1015px;top:602px;" width="7" height="4" viewBox="0 0 7 4"><path d="M0 0h7l-3.5 4z" fill="#6a6a6a"/></svg>
<div class="a" style="left:6px;top:610px;width:1023px;height:29px;background:#e6e6e6;"></div>
<div class="a" style="left:6px;top:610px;width:1002px;height:1px;background:#ababab;"></div>
<div class="a" style="left:106px;top:610px;width:81px;height:25px;background:#fff;border-left:1px solid #ababab;border-right:1px solid #ababab;"></div>
<div class="a" style="left:106px;top:633px;width:81px;height:2px;background:#217346;"></div>
<span class="t" style="left:118.7px;top:617.3px;font-size:12.5px;line-height:14px;color:#217346;font-weight:700;letter-spacing:0.051px;">Planilha1</span>
<svg class="a" style="left:33px;top:620px;" width="5" height="7" viewBox="0 0 5 7"><path d="M5 0V7L0 3.5Z" fill="#c2c2c2"/></svg>
<svg class="a" style="left:62px;top:620px;" width="5" height="7" viewBox="0 0 5 7"><path d="M0 0V7L5 3.5Z" fill="#c2c2c2"/></svg>
<svg class="a" style="left:220px;top:616px;" width="16" height="16" viewBox="0 0 16 16"><circle cx="8" cy="8" r="7.3" fill="none" stroke="#7a7a7a" stroke-width="1.1"/><path d="M8 4V12M4 8H12" stroke="#6a6a6a" stroke-width="1.6"/></svg>
<div class="a" style="left:620px;top:619px;width:2px;height:2px;background:#b0b0b0;"></div>
<div class="a" style="left:620px;top:623px;width:2px;height:2px;background:#b0b0b0;"></div>
<div class="a" style="left:620px;top:627px;width:2px;height:2px;background:#b0b0b0;"></div>
<div class="a" style="left:638px;top:617px;width:370px;height:15px;background:#d5d5d5;"></div>
<div class="a" style="left:638px;top:617px;width:14px;height:15px;background:#fff;border:1px solid #c6c6c6;"></div>
<svg class="a" style="left:642px;top:621px;" width="5" height="7" viewBox="0 0 5 7"><path d="M5 0V7L0 3.5Z" fill="#6a6a6a"/></svg>
<div class="a" style="left:652px;top:617px;width:314px;height:15px;background:#fff;border:1px solid #c6c6c6;"></div>
<div class="a" style="left:993px;top:617px;width:15px;height:15px;background:#fff;border:1px solid #c6c6c6;"></div>
<svg class="a" style="left:999px;top:621px;" width="5" height="7" viewBox="0 0 5 7"><path d="M0 0V7L5 3.5Z" fill="#6a6a6a"/></svg>
<div class="a" style="left:6px;top:638px;width:1023px;height:1px;background:#cfcfcf;"></div>
<div class="a" style="left:6px;top:639px;width:1023px;height:21px;background:#f3f3f3;"></div>
<span class="t" style="left:14.3px;top:642px;font-size:11.5px;line-height:12px;color:#3b3b3b;letter-spacing:0.022px;">Pronto</span>
<span class="t" style="left:67.1px;top:642px;font-size:11.5px;line-height:12px;color:#3b3b3b;letter-spacing:-0.265px;">Scroll Lock</span>
<span class="t" style="left:401.4px;top:642px;font-size:11.5px;line-height:12px;color:#3b3b3b;letter-spacing:-0.146px;">Média:</span>
<span class="t" style="left:442.5px;top:642px;font-size:11.1px;line-height:12px;color:#3b3b3b;letter-spacing:-0.299px;">R$ 2.452,87</span>
<span class="t" style="left:518.1px;top:642px;font-size:11.5px;line-height:12px;color:#3b3b3b;letter-spacing:-0.106px;">Contagem: 7</span>
<span class="t" style="left:599.7px;top:642px;font-size:10.6px;line-height:12px;color:#3b3b3b;letter-spacing:-0.362px;">Soma:</span>
<span class="t" style="left:636.5px;top:642px;font-size:11.1px;line-height:12px;color:#3b3b3b;letter-spacing:-0.287px;">R$ 17.170,10</span>
<div class="a" style="left:718px;top:638px;width:40px;height:22px;background:#c6c6c6;"></div>
<svg class="a" style="left:731px;top:642px;" width="14" height="14" viewBox="0 0 14 14"><path d="M0.5 0.5H13.5V13.5H0.5ZM0.5 4.8H13.5M0.5 9.2H13.5M4.8 0.5V13.5M9.2 0.5V13.5" fill="none" stroke="#5a5a5a"/></svg>
<svg class="a" style="left:771px;top:642px;" width="14" height="14" viewBox="0 0 14 14"><rect x="0.5" y="0.5" width="13" height="13" fill="none" stroke="#5a5a5a"/><rect x="3.5" y="3.5" width="7" height="7" fill="none" stroke="#5a5a5a"/><path d="M5 5.5H9M5 7.2H9M5 9H9" stroke="#5a5a5a" stroke-width=".8"/></svg>
<svg class="a" style="left:811px;top:642px;" width="14" height="14" viewBox="0 0 14 14"><path d="M0.5 0.5H13.5V13.5H0.5Z" fill="none" stroke="#5a5a5a"/><path d="M4.5 0.5V7.5H9.5V0.5" fill="none" stroke="#5a5a5a"/></svg>
<div class="a" style="left:844px;top:648px;width:8px;height:1px;background:#444;"></div>
<div class="a" style="left:857px;top:648px;width:100px;height:1px;background:#a0a0a0;"></div>
<div class="a" style="left:905px;top:642px;width:5px;height:13px;background:#666;"></div>
<div class="a" style="left:961px;top:648px;width:9px;height:1px;background:#444;"></div>
<div class="a" style="left:965px;top:644px;width:1px;height:9px;background:#444;"></div>
<span class="t" style="left:983.6px;top:642px;font-size:10.7px;line-height:12px;color:#3b3b3b;letter-spacing:-0.292px;">100%</span>
<div class="a" style="left:5px;top:2px;width:1025px;height:659px;border:1px solid #217346;"></div>
</body></html>
